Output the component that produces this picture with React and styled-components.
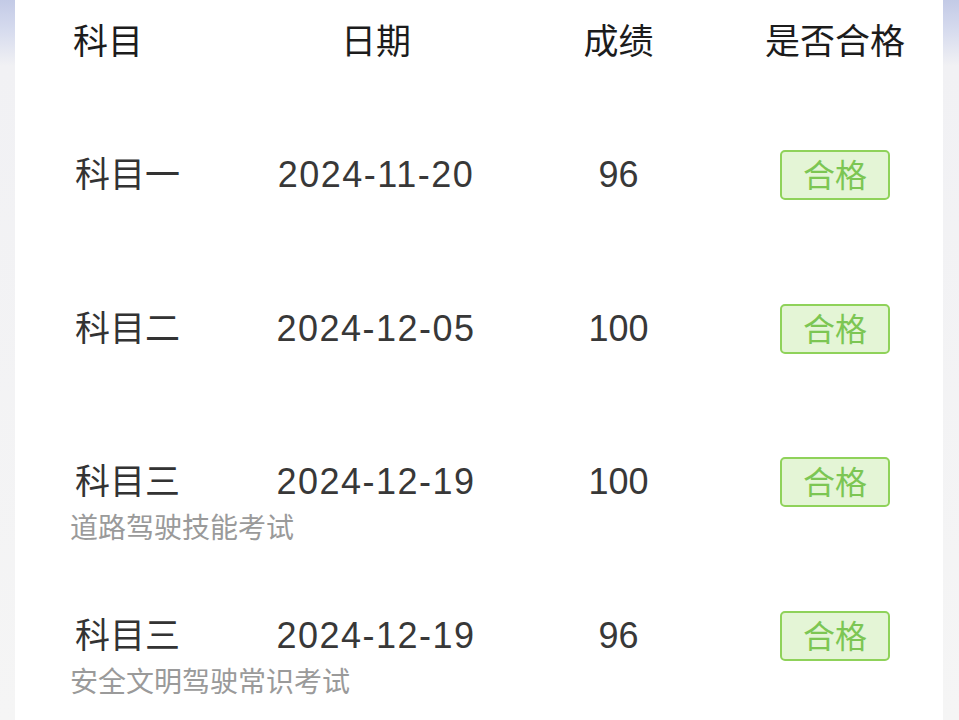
import React from 'react'
import styled, { createGlobalStyle } from "styled-components";

const GlobalStyle = createGlobalStyle`
  html, body {
    margin: 0;
    padding: 0;
  }
  body {
    background: linear-gradient(180deg, #c3cae6 0px, #d6dbee 30px, #f1f1f4 66px, #f5f5f5 100%);
    font-family: "Noto Sans CJK SC", "Noto Sans", sans-serif;
  }
`;

const Card = styled.div`
  margin: 0 16px 0 15px;
  min-height: 100vh;
  background-color: #ffffff;
  box-sizing: border-box;
  padding: 0 19px 0 58px;
`;

const Grid = styled.div`
  display: grid;
  grid-template-columns: 188px 230px 255px 178px;
`;

const HeaderRow = styled(Grid)`
  height: 82px;
  box-sizing: border-box;
  padding-bottom: 5px;
  align-items: center;
`;

const HeaderCell = styled.div`
  font-size: 35px;
  line-height: 44px;
  color: #1c1c1c;
  text-align: ${(p) => (p.left ? "left" : "center")};
`;

const Row = styled(Grid)`
  height: 153.5px;
  box-sizing: border-box;
  padding-top: 71px;
  align-items: start;
`;

const NameCell = styled.div`
  display: flex;
  flex-direction: column;
`;

const Name = styled.div`
  font-size: 35px;
  line-height: 44px;
  margin-top: -3px;
  color: #333333;
  padding-left: 2px;
`;

const Sub = styled.div`
  margin-top: 8px;
  margin-left: -3px;
  font-size: 28px;
  line-height: 34px;
  color: #9a9a9a;
  white-space: nowrap;
`;

const Value = styled.div`
  font-family: "Liberation Sans", Arial, sans-serif;
  font-size: 36px;
  line-height: 44px;
  color: #383838;
  text-align: center;
  letter-spacing: ${(p) => p.spacing || "0px"};
`;

const BadgeCell = styled.div`
  height: 44px;
  display: flex;
  align-items: center;
  justify-content: center;
`;

const Badge = styled.div`
  width: 110px;
  height: 50px;
  box-sizing: border-box;
  border: 2px solid #8fd25a;
  border-radius: 5px;
  background-color: #e4f5d6;
  color: #7cc653;
  font-size: 32px;
  line-height: 42px;
  text-align: center;
`;

const records = [
  { name: "科目一", date: "2024-11-20", score: 96, pass: true },
  { name: "科目二", date: "2024-12-05", score: 100, pass: true },
  { name: "科目三", sub: "道路驾驶技能考试", date: "2024-12-19", score: 100, pass: true },
  { name: "科目三", sub: "安全文明驾驶常识考试", date: "2024-12-19", score: 96, pass: true },
];

const App = () => {
  return (
    <>
      <GlobalStyle />
      <Card>
        <HeaderRow>
          <HeaderCell left>科目</HeaderCell>
          <HeaderCell>日期</HeaderCell>
          <HeaderCell>成绩</HeaderCell>
          <HeaderCell>是否合格</HeaderCell>
        </HeaderRow>
        {records.map((r, i) => (
          <Row key={i}>
            <NameCell>
              <Name>{r.name}</Name>
              {r.sub && <Sub>{r.sub}</Sub>}
            </NameCell>
            <Value spacing="1.5px">{r.date}</Value>
            <Value>{r.score}</Value>
            <BadgeCell>
              <Badge>{r.pass ? "合格" : "不合格"}</Badge>
            </BadgeCell>
          </Row>
        ))}
      </Card>
    </>
  )
}

export default App;
